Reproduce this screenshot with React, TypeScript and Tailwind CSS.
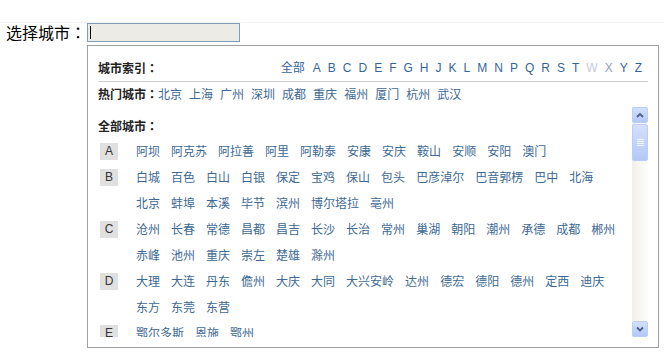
import React from 'react';

const INDEX = ['A', 'B', 'C', 'D', 'E', 'F', 'G', 'H', 'J', 'K', 'L', 'M', 'N', 'P', 'Q', 'R', 'S', 'T', 'W', 'X', 'Y', 'Z'];

const HOT = ['北京', '上海', '广州', '深圳', '成都', '重庆', '福州', '厦门', '杭州', '武汉'];

const GROUPS: { letter: string; cities: string[] }[] = [
  { letter: 'A', cities: ['阿坝', '阿克苏', '阿拉善', '阿里', '阿勒泰', '安康', '安庆', '鞍山', '安顺', '安阳', '澳门'] },
  {
    letter: 'B',
    cities: ['白城', '百色', '白山', '白银', '保定', '宝鸡', '保山', '包头', '巴彦淖尔', '巴音郭楞', '巴中', '北海', '北京', '蚌埠', '本溪', '毕节', '滨州', '博尔塔拉', '亳州'],
  },
  {
    letter: 'C',
    cities: ['沧州', '长春', '常德', '昌都', '昌吉', '长沙', '长治', '常州', '巢湖', '朝阳', '潮州', '承德', '成都', '郴州', '赤峰', '池州', '重庆', '崇左', '楚雄', '滁州'],
  },
  {
    letter: 'D',
    cities: ['大理', '大连', '丹东', '儋州', '大庆', '大同', '大兴安岭', '达州', '德宏', '德阳', '德州', '定西', '迪庆', '东方', '东莞', '东营'],
  },
  { letter: 'E', cities: ['鄂尔多斯', '恩施', '鄂州'] },
];

// full-width colon, centred in its cell like the reference font does
function Colon() {
  return <span style={{ fontFamily: '"Noto Sans CJK TC", sans-serif' }}>：</span>;
}

function Arrow({ up }: { up: boolean }) {
  return (
    <svg width="8" height="6" viewBox="0 0 8 6">
      <path d={up ? 'M1 5 L4 2 L7 5' : 'M1 1.5 L4 4.5 L7 1.5'} fill="none" stroke="#4d6185" strokeWidth="1.8" />
    </svg>
  );
}

function ScrollBar() {
  const btn = 'rounded-[2px] border border-[#b9cdf8] bg-gradient-to-b from-[#d3e0fd] to-[#b4c8f5] flex items-center justify-center';
  return (
    <div className="w-[16px] h-full flex flex-col bg-gradient-to-r from-[#f1efe9] to-[#fdfdfa]">
      <div className={`h-[16px] ${btn}`}>
        <Arrow up />
      </div>
      <div className={`mt-[1px] h-[37px] flex-col gap-[1px] ${btn}`}>
        <div className="w-[7px] h-px bg-[#f2f6ff]" />
        <div className="w-[7px] h-px bg-[#f2f6ff]" />
        <div className="w-[7px] h-px bg-[#f2f6ff]" />
        <div className="w-[7px] h-px bg-[#f2f6ff]" />
      </div>
      <div className="flex-1" />
      <div className={`h-[16px] ${btn}`}>
        <Arrow up={false} />
      </div>
    </div>
  );
}

export default function App() {
  return (
    <div
      className="w-[664px] h-[353px] bg-white overflow-hidden text-[12px] text-[#222]"
      style={{ fontFamily: '"Liberation Sans", "Noto Sans CJK SC", sans-serif' }}
    >
      <div className="h-[23px] border-b border-[#f2f2f2]" />

      {/* input row */}
      <div className="flex">
        <div className="w-[87px] shrink-0 pl-[6px] h-[19px] whitespace-nowrap text-[16px] leading-[18px] text-black">
          选择城市<Colon />
        </div>
        <div className="w-[153px] h-[19px] border border-[#7f9db9] bg-[#ecebe5] relative">
          <div className="absolute left-[2px] top-[2px] w-px h-[13px] bg-black" />
        </div>
      </div>

      {/* dropdown */}
      <div className="ml-[87px] mt-[3px] w-[572px] h-[303px] border border-[#a0a0a0] px-[10px] pt-[11px] overflow-hidden">
        <div className="h-[22px] flex items-center justify-between">
          <span className="font-bold text-[#222]">
            城市索引<Colon />
          </span>
          <div className="flex items-center gap-[7px] pr-[6px] text-[#336699]">
            <span className="mr-[1px]">全部</span>
            {INDEX.map(l => (
              <span
                key={l}
                className={l === 'W' ? 'text-[#c3ccd6]' : l === 'X' ? 'text-[#8ea4ba]' : ''}
              >
                {l}
              </span>
            ))}
          </div>
        </div>
        <div className="mt-[2px] h-px bg-[#cccccc]" />

        <div className="h-[25px] flex items-center">
          <span className="font-bold text-[#222]">
            热门城市<Colon />
          </span>
          <div className="flex gap-[7px] text-[#3d6994]">
            {HOT.map(c => (
              <span key={c}>{c}</span>
            ))}
          </div>
        </div>

        <div className="h-[230px] flex">
          <div className="flex-1 overflow-hidden pt-[6px]">
            <div className="h-[26px] leading-[26px] font-bold text-[#222]">
              全部城市<Colon />
            </div>
            {GROUPS.map(g => (
              <div key={g.letter} className="flex items-start">
                <div className="mt-[4px] ml-[2px] w-[18px] h-[17px] bg-[#e0e0e0] text-center leading-[17px] text-[#333]">
                  {g.letter}
                </div>
                <div className="ml-[18px] w-[486px] flex flex-wrap gap-x-[11px] leading-[26px] text-[#3d6994]">
                  {g.cities.map(c => (
                    <span key={c}>{c}</span>
                  ))}
                </div>
              </div>
            ))}
          </div>
          <ScrollBar />
        </div>
      </div>
    </div>
  );
}
